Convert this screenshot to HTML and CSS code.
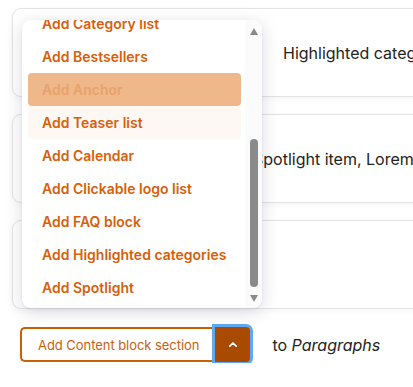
FILE: index.html
```html
<!DOCTYPE html>
<html>
<head>
<meta charset="utf-8">
<link rel="stylesheet" href="styles.css">
</head>
<body>
<div class="page">
  <div class="cards">
    <div class="card"><div class="card-text">Highlighted categories</div></div>
    <div class="card"><div class="card-text card-text--wide">Spotlight item, Lorem ipsum</div></div>
    <div class="card"></div>
  </div>
  <div class="actions">
    <div class="split">
      <button class="split-main">Add Content block section</button>
      <button class="split-toggle" aria-label="Toggle">
        <svg width="10" height="7" viewBox="0 0 10 7"><path d="M1.8 5.2 L5 2 L8.2 5.2" fill="none" stroke="#fff" stroke-width="1.7" stroke-linecap="round" stroke-linejoin="round"/></svg>
      </button>
    </div>
    <span class="target">to <em>Paragraphs</em></span>
  </div>
  <div class="menu">
    <div class="menu-list">
      <div class="menu-item">Add Category list</div>
      <div class="menu-item">Add Bestsellers</div>
      <div class="menu-item menu-item--active">Add Anchor</div>
      <div class="menu-item menu-item--hover">Add Teaser list</div>
      <div class="menu-item">Add Calendar</div>
      <div class="menu-item">Add Clickable logo list</div>
      <div class="menu-item">Add FAQ block</div>
      <div class="menu-item">Add Highlighted categories</div>
      <div class="menu-item">Add Spotlight</div>
    </div>
    <div class="scrollbar">
      <span class="arrow arrow--up"></span>
      <div class="track"><div class="thumb"></div></div>
      <span class="arrow arrow--down"></span>
    </div>
  </div>
</div>
</body>
</html>
```
FILE: styles.css
```css
html, body {
  margin: 0;
  padding: 0;
  background: #fff;
  overflow: hidden;
}
body {
  font-family: Inter, "Noto Sans", sans-serif;
  color: #232323;
}
.page {
  position: relative;
  width: 480px;
  padding: 8px 0 0 12px;
}
.cards {
  display: flex;
  flex-direction: column;
  gap: 17px;
}
.card {
  height: 87px;
  border: 1px solid #e3e3e6;
  border-radius: 9px;
  background: #fff;
  display: flex;
  align-items: center;
  box-shadow: 0 2px 6px rgba(30, 30, 60, 0.04);
}
.card-text {
  padding-left: 270px;
  font-size: 16px;
  white-space: nowrap;
}
.card-text--wide {
  padding-left: 240px;
}
.actions {
  display: flex;
  align-items: center;
  gap: 21px;
  margin-top: 18px;
  padding-left: 8px;
}
.split {
  display: flex;
}
.split-main {
  font-family: Inter, sans-serif;
  font-size: 13px;
  color: #c85f10;
  background: #fff;
  border: 2px solid #cc5f00;
  border-right: none;
  border-radius: 5px 0 0 5px;
  height: 35px;
  padding: 0 15px 0 16px;
  letter-spacing: -0.05px;
}
.split-toggle {
  width: 37px;
  height: 37px;
  margin-top: -1px;
  background: #a84b00;
  border: 2px solid #a84b00;
  border-radius: 0 5px 5px 0;
  outline: 3px solid #5fa8f2;
  outline-offset: -1px;
  display: flex;
  align-items: center;
  justify-content: center;
  padding: 0;
}
.target {
  font-size: 16px;
  color: #232323;
}
.menu {
  position: absolute;
  left: 22px;
  top: 20px;
  width: 240px;
  height: 288px;
  background: #fff;
  border-radius: 9px;
  box-shadow: 0 4px 18px rgba(40, 40, 80, 0.16), 0 1px 3px rgba(40, 40, 80, 0.06);
  overflow: hidden;
  display: flex;
}
.menu-list {
  flex: 1;
  padding: 0 4px 0 6px;
  margin-top: -13px;
}
.menu-item {
  height: 33px;
  line-height: 33px;
  padding-left: 14px;
  font-size: 14px;
  font-weight: 600;
  color: #d7600b;
  border-radius: 4px;
  white-space: nowrap;
}
.menu-item--active {
  background: #efb88b;
  color: #e8a26a;
}
.menu-item--hover {
  background: #fdf8f4;
}
.scrollbar {
  width: 17px;
  background: #fbfbfb;
  display: flex;
  flex-direction: column;
  align-items: center;
  padding: 8px 0 6px;
  box-sizing: border-box;
}
.arrow {
  width: 0;
  height: 0;
  border-left: 4.5px solid transparent;
  border-right: 4.5px solid transparent;
}
.arrow--up {
  border-bottom: 7px solid #8a8a8a;
}
.arrow--down {
  border-top: 7px solid #8a8a8a;
}
.track {
  flex: 1;
  width: 8px;
  display: flex;
  flex-direction: column;
  justify-content: flex-end;
  padding: 0 0 8px;
}
.thumb {
  height: 148px;
  width: 8px;
  background: #8a8a8a;
  border-radius: 4px;
}
```
